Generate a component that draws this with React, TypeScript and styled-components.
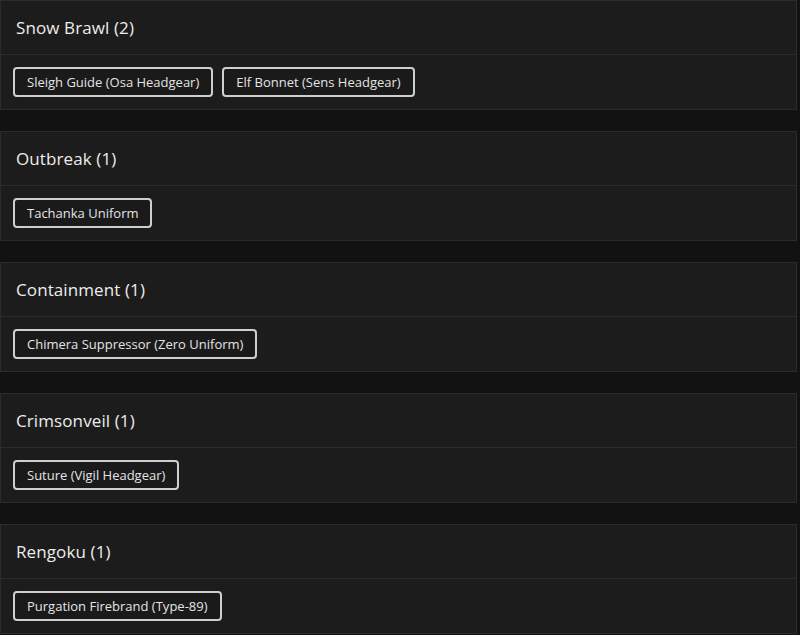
import React from "react";
import styled, { createGlobalStyle } from "styled-components";

const Global = createGlobalStyle`
  html, body { margin: 0; padding: 0; background: #121212; }
  body { font-family: "Open Sans", "Noto Sans", sans-serif; color: #e6e6e6; }
`;

const Page = styled.div`
  width: 797px;
  display: flex;
  flex-direction: column;
  gap: 21px;
`;

const Card = styled.section`
  background: #1c1c1c;
  border: 1px solid #2b2b2b;
  display: flex;
  flex-direction: column;
`;

const Header = styled.div`
  height: 53px;
  display: flex;
  align-items: center;
  padding: 0 15px;
  border-bottom: 1px solid #2b2b2b;
`;

const Title = styled.h2`
  margin: 0;
  font-size: 17px;
  font-weight: 500;
  color: #ececec;
  letter-spacing: 0.1px;
`;

const Body = styled.div`
  display: flex;
  flex-wrap: wrap;
  gap: 9px;
  padding: 12px 12px 12px;
`;

const Tag = styled.span`
  display: inline-flex;
  align-items: center;
  height: 30px;
  box-sizing: border-box;
  padding: 0 12px;
  border: 2px solid #cfcfcf;
  border-radius: 4px;
  background: #1a1a1a;
  font-size: 13px;
  color: #e4e4e4;
  white-space: nowrap;
`;

const groups = [
  { name: "Snow Brawl", items: ["Sleigh Guide (Osa Headgear)", "Elf Bonnet (Sens Headgear)"] },
  { name: "Outbreak", items: ["Tachanka Uniform"] },
  { name: "Containment", items: ["Chimera Suppressor (Zero Uniform)"] },
  { name: "Crimsonveil", items: ["Suture (Vigil Headgear)"] },
  { name: "Rengoku", items: ["Purgation Firebrand (Type-89)"] },
];

export default function App() {
  return (
    <>
      <Global />
      <Page>
        {groups.map((g) => (
          <Card key={g.name}>
            <Header>
              <Title>
                {g.name} ({g.items.length})
              </Title>
            </Header>
            <Body>
              {g.items.map((it) => (
                <Tag key={it}>{it}</Tag>
              ))}
            </Body>
          </Card>
        ))}
      </Page>
    </>
  );
}
